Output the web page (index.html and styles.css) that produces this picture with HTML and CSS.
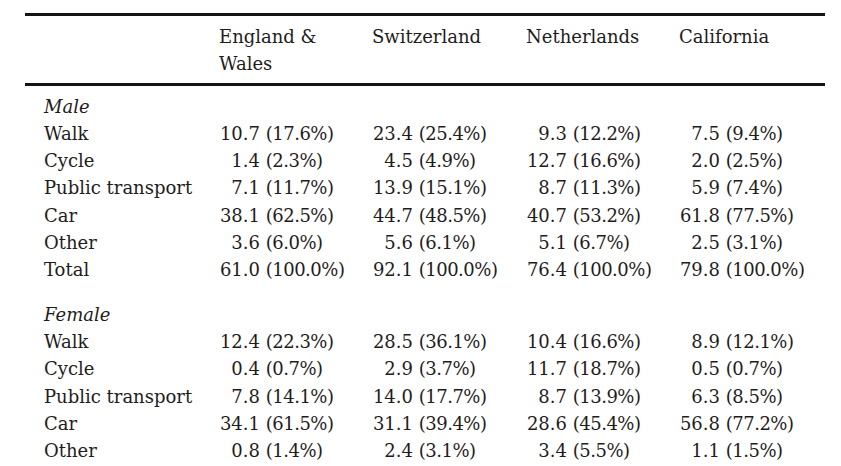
FILE: index.html
```html
<!DOCTYPE html>
<html lang="en">
<head>
<meta charset="utf-8">
<title>Travel mode table</title>
<link rel="stylesheet" href="styles.css">
</head>
<body>
<div class="page">
  <table class="data">
    <colgroup>
      <col class="c-label">
      <col class="c-eng">
      <col class="c-swi">
      <col class="c-net">
      <col class="c-cal">
    </colgroup>
    <thead>
      <tr>
        <th></th>
        <th>England &amp;<br>Wales</th>
        <th>Switzerland</th>
        <th>Netherlands</th>
        <th>California</th>
      </tr>
    </thead>
    <tbody>
      <tr class="group first"><td class="label"><em>Male</em></td><td></td><td></td><td></td><td></td></tr>
      <tr><td class="label">Walk</td><td><span class="n">10.7</span> <span class="p">(17.6%)</span></td><td><span class="n">23.4</span> <span class="p">(25.4%)</span></td><td><span class="n">9.3</span> <span class="p">(12.2%)</span></td><td><span class="n">7.5</span> <span class="p">(9.4%)</span></td></tr>
      <tr><td class="label">Cycle</td><td><span class="n">1.4</span> <span class="p">(2.3%)</span></td><td><span class="n">4.5</span> <span class="p">(4.9%)</span></td><td><span class="n">12.7</span> <span class="p">(16.6%)</span></td><td><span class="n">2.0</span> <span class="p">(2.5%)</span></td></tr>
      <tr><td class="label">Public transport</td><td><span class="n">7.1</span> <span class="p">(11.7%)</span></td><td><span class="n">13.9</span> <span class="p">(15.1%)</span></td><td><span class="n">8.7</span> <span class="p">(11.3%)</span></td><td><span class="n">5.9</span> <span class="p">(7.4%)</span></td></tr>
      <tr><td class="label">Car</td><td><span class="n">38.1</span> <span class="p">(62.5%)</span></td><td><span class="n">44.7</span> <span class="p">(48.5%)</span></td><td><span class="n">40.7</span> <span class="p">(53.2%)</span></td><td><span class="n">61.8</span> <span class="p">(77.5%)</span></td></tr>
      <tr><td class="label">Other</td><td><span class="n">3.6</span> <span class="p">(6.0%)</span></td><td><span class="n">5.6</span> <span class="p">(6.1%)</span></td><td><span class="n">5.1</span> <span class="p">(6.7%)</span></td><td><span class="n">2.5</span> <span class="p">(3.1%)</span></td></tr>
      <tr><td class="label">Total</td><td><span class="n">61.0</span> <span class="p">(100.0%)</span></td><td><span class="n">92.1</span> <span class="p">(100.0%)</span></td><td><span class="n">76.4</span> <span class="p">(100.0%)</span></td><td><span class="n">79.8</span> <span class="p">(100.0%)</span></td></tr>
      <tr class="group"><td class="label"><em>Female</em></td><td></td><td></td><td></td><td></td></tr>
      <tr><td class="label">Walk</td><td><span class="n">12.4</span> <span class="p">(22.3%)</span></td><td><span class="n">28.5</span> <span class="p">(36.1%)</span></td><td><span class="n">10.4</span> <span class="p">(16.6%)</span></td><td><span class="n">8.9</span> <span class="p">(12.1%)</span></td></tr>
      <tr><td class="label">Cycle</td><td><span class="n">0.4</span> <span class="p">(0.7%)</span></td><td><span class="n">2.9</span> <span class="p">(3.7%)</span></td><td><span class="n">11.7</span> <span class="p">(18.7%)</span></td><td><span class="n">0.5</span> <span class="p">(0.7%)</span></td></tr>
      <tr><td class="label">Public transport</td><td><span class="n">7.8</span> <span class="p">(14.1%)</span></td><td><span class="n">14.0</span> <span class="p">(17.7%)</span></td><td><span class="n">8.7</span> <span class="p">(13.9%)</span></td><td><span class="n">6.3</span> <span class="p">(8.5%)</span></td></tr>
      <tr><td class="label">Car</td><td><span class="n">34.1</span> <span class="p">(61.5%)</span></td><td><span class="n">31.1</span> <span class="p">(39.4%)</span></td><td><span class="n">28.6</span> <span class="p">(45.4%)</span></td><td><span class="n">56.8</span> <span class="p">(77.2%)</span></td></tr>
      <tr><td class="label">Other</td><td><span class="n">0.8</span> <span class="p">(1.4%)</span></td><td><span class="n">2.4</span> <span class="p">(3.1%)</span></td><td><span class="n">3.4</span> <span class="p">(5.5%)</span></td><td><span class="n">1.1</span> <span class="p">(1.5%)</span></td></tr>
    </tbody>
  </table>
</div>
</body>
</html>
```
FILE: styles.css
```css
html, body {
  margin: 0;
  padding: 0;
  background: #ffffff;
}

body {
  font-family: "DejaVu Serif", "Liberation Serif", serif;
  font-size: 18px;
  color: #1f1c1d;
}

.page {
  padding: 13px 0 0 25px;
}

.data {
  width: 800px;
  table-layout: fixed;
  border-collapse: collapse;
  border-spacing: 0;
  border-top: 3px solid #141414;
}

.c-label { width: 194px; }
.c-eng { width: 153px; }
.c-swi { width: 154px; }
.c-net { width: 153px; }
.c-cal { width: 146px; }

.data th,
.data td {
  padding: 0;
  line-height: 27.3px;
  text-align: left;
  vertical-align: top;
  white-space: nowrap;
  font-weight: normal;
}

.data thead tr {
  border-bottom: 3px solid #141414;
}

.data thead th {
  padding-top: 7px;
  padding-bottom: 5px;
}

.data td.label {
  padding-left: 19px;
}

.data tr.first td {
  padding-top: 7px;
}

.data tr.group:not(.first) td {
  padding-top: 17px;
}

.n {
  display: inline-block;
  width: 41px;
  text-align: right;
}

.p {
  letter-spacing: -0.5px;
}
```
